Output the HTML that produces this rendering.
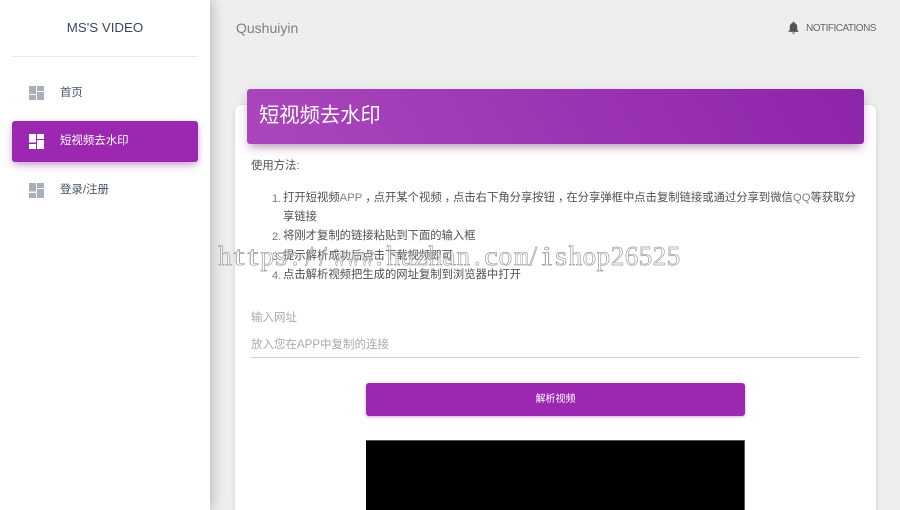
<!DOCTYPE html>
<html lang="zh">
<head>
<meta charset="utf-8">
<title>MS'S VIDEO</title>
<style>
html,body{margin:0;padding:0;width:900px;height:510px;overflow:hidden;background:#eee;}
body{position:relative;font-family:"Liberation Sans","Noto Sans CJK SC",sans-serif;color:#3c4858;}
.abs{position:absolute;white-space:nowrap;}
#side{position:absolute;left:0;top:0;width:210px;height:510px;background:#fff;box-shadow:0 0 14px rgba(0,0,0,.3);z-index:3;}
#card{position:absolute;left:235px;top:105px;width:641px;height:430px;background:#fff;border-radius:6px;box-shadow:0 1px 4px rgba(0,0,0,.14);}
#head{position:absolute;left:247px;top:89px;width:617px;height:55px;border-radius:3px;background:linear-gradient(60deg,#ab47bc,#8e24aa);box-shadow:0 4px 12px rgba(0,0,0,.14),0 6px 8px -4px rgba(156,39,176,.4);}
.t{color:#505050;font-size:11.33px;line-height:19px;}
.t i{font-style:normal;color:#808080;}
.t u{text-decoration:none;position:relative;left:3px;}
.n{color:#777;font-size:11px;line-height:19px;}
.g{color:#aaa;font-size:11.5px;}
.nav{font-size:11.45px;line-height:16px;color:#4a5564;}
#wm{position:absolute;left:218px;top:240px;z-index:5;white-space:nowrap;font-family:"Liberation Serif",serif;font-size:27px;line-height:32px;color:rgba(255,255,255,.35);-webkit-text-stroke:.7px #a0a0a0;}
#wm b{display:inline-block;width:14.03px;text-align:center;font-weight:normal;}
#wm b.w{transform:scaleX(.72);}
#wm b.x{transform:scaleX(1.45);}
#wm b.y{transform:scaleX(1.15);}
</style>
</head>
<body>
<div id="side">
  <div class="abs" style="left:0;width:210px;text-align:center;top:19px;font-size:13.3px;line-height:18px;color:#3c4858;">MS'S VIDEO</div>
  <div style="position:absolute;left:12px;top:56px;width:186px;height:1px;background:#e9e9e9;"></div>

  <svg style="position:absolute;left:29px;top:86px" width="15" height="14" viewBox="0 0 15 14"><path fill="#a9afbb" d="M0 0h7v8H0zM8 0h7v5H8zM8 6h7v8H8zM0 9h7v5H0z"/></svg>
  <div class="abs nav" style="left:60px;top:85px;">首页</div>

  <div style="position:absolute;left:12px;top:121px;width:186px;height:41px;background:#9c27b0;border-radius:3px;box-shadow:0 4px 10px -2px rgba(156,39,176,.42),0 2px 6px rgba(0,0,0,.12);"></div>
  <svg style="position:absolute;left:29px;top:134px" width="15" height="15" viewBox="0 0 15 15"><path fill="#fff" d="M0 0h7v8.500H0zM8 0h7v5H8zM8 6h7v9H8zM0 10h7v5H0z"/></svg>
  <div class="abs nav" style="left:60px;top:133px;color:#fff;">短视频去水印</div>

  <svg style="position:absolute;left:29px;top:183px" width="15" height="15" viewBox="0 0 15 15"><path fill="#a9afbb" d="M0 0h7v8.500H0zM8 0h7v5H8zM8 6h7v9H8zM0 10h7v5H0z"/></svg>
  <div class="abs nav" style="left:60px;top:182px;">登录/注册</div>
</div>

<div class="abs" style="left:236px;top:19px;font-size:14px;line-height:18px;color:#808080;">Qushuiyin</div>
<svg style="position:absolute;left:786px;top:20px" width="15" height="15" viewBox="0 0 24 24"><path fill="#555" d="M12 22c1.100 0 2-.9 2-2h-4c0 1.100.9 2 2 2zm6-6v-5c0-3.100-1.600-5.600-4.500-6.300V4c0-.8-.7-1.500-1.500-1.500s-1.500.7-1.500 1.500v.7C7.600 5.400 6 7.900 6 11v5l-2 2v1h16v-1z"/></svg>
<div class="abs" style="left:806px;top:22px;font-size:10px;line-height:14px;letter-spacing:-.5px;color:#666;">NOTIFICATIONS</div>

<div id="card"></div>
<div id="head"></div>
<div class="abs" style="left:259px;top:102px;font-size:20.3px;line-height:28px;color:#fff;">短视频去水印</div>

<div class="abs t" style="left:251px;top:157px;">使用方法:</div>
<div class="abs n" style="left:272px;top:190px;">1.</div>
<div class="abs t" style="left:283px;top:189px;">打开短视频<i>APP</i><u>，</u>点开某个视频<u>，</u>点击右下角分享按钮<u>，</u>在分享弹框中点击复制链接或通过分享到微信<i>QQ</i>等获取分</div>
<div class="abs t" style="left:283px;top:208px;">享链接</div>
<div class="abs n" style="left:272px;top:228px;">2.</div>
<div class="abs t" style="left:283px;top:227px;">将刚才复制的链接粘贴到下面的输入框</div>
<div class="abs n" style="left:272px;top:248px;">3.</div>
<div class="abs t" style="left:283px;top:247px;">提示解析成功后点击下载视频即可</div>
<div class="abs n" style="left:272px;top:267px;">4.</div>
<div class="abs t" style="left:283px;top:266px;">点击解析视频把生成的网址复制到浏览器中打开</div>

<div class="abs g" style="left:251px;top:310px;line-height:16px;">输入网址</div>
<div class="abs g" style="left:251px;top:337px;line-height:16px;">放入您在APP中复制的连接</div>
<div style="position:absolute;left:251px;top:357px;width:609px;height:1px;background:#d2d2d2;"></div>

<div style="position:absolute;left:366px;top:383px;width:379px;height:33px;background:#9c27b0;border-radius:3px;box-shadow:0 1px 3px rgba(156,39,176,.4);"></div>
<div class="abs" style="left:366px;width:379px;text-align:center;top:392px;font-size:10px;line-height:15px;color:#fff;">解析视频</div>

<div style="position:absolute;left:366px;top:440px;width:379px;height:70px;background:#000;border-top:1px solid #555;border-right:1px solid #555;box-sizing:border-box;"></div>

<div id="wm"><b>h</b><b class="x">t</b><b class="x">t</b><b>p</b><b class="y">s</b><b>:</b><b>/</b><b>/</b><b class="w">w</b><b class="w">w</b><b class="w">w</b><b>.</b><b>h</b><b>u</b><b class="y">z</b><b>h</b><b class="y">a</b><b>n</b><b>.</b><b class="y">c</b><b>o</b><b class="w">m</b><b>/</b><b class="x">i</b><b class="y">s</b><b>h</b><b>o</b><b>p</b><b>2</b><b>6</b><b>5</b><b>2</b><b>5</b></div>
</body>
</html>
